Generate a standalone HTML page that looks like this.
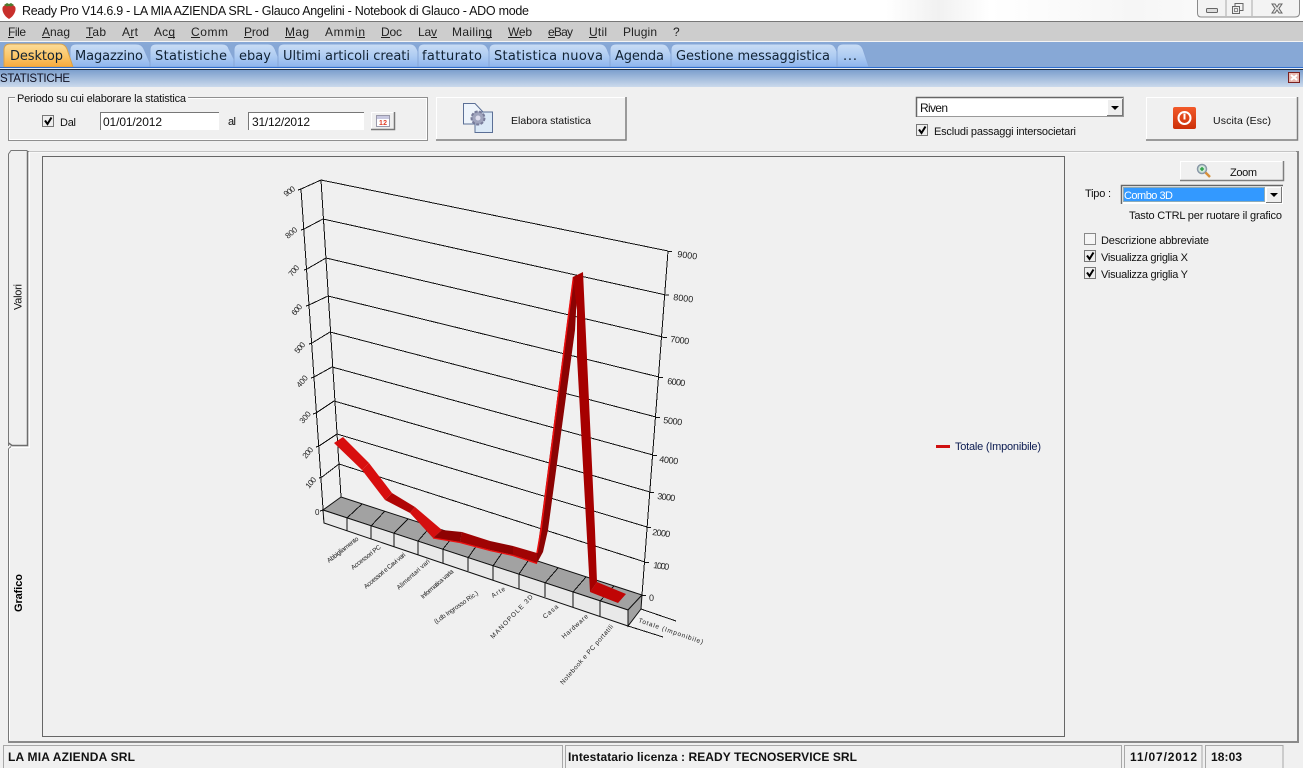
<!DOCTYPE html>
<html lang="it"><head><meta charset="utf-8"><title>Ready Pro</title>
<style>
html,body{margin:0;padding:0;width:1303px;height:768px;overflow:hidden;background:#f0f0f0}
svg{display:block}
text{font-family:"Liberation Sans",sans-serif;font-size:11px;fill:#111;white-space:pre}
.m{font-size:12px;fill:#222}
.tb{font-family:"DejaVu Sans",sans-serif;font-size:13px;fill:#123}
.s{font-size:12px;font-weight:bold;fill:#111}
.l{font-size:6.5px;fill:#222}
.a{font-size:9px;fill:#222}
.b{font-size:8px;fill:#222}
.g{stroke:#111;stroke-width:1;fill:none;shape-rendering:crispEdges}
.tab{fill:url(#tabBlue);stroke:#86a6d6;stroke-width:1}
</style></head><body>
<svg width="1303" height="768" viewBox="0 0 1303 768" xmlns="http://www.w3.org/2000/svg">
<defs>
<linearGradient id="tabBlue" x1="0" y1="0" x2="0" y2="1"><stop offset="0" stop-color="#c9ddf5"/><stop offset=".5" stop-color="#b0cdf2"/><stop offset="1" stop-color="#8db5ee"/></linearGradient>
<linearGradient id="tabOr" x1="0" y1="0" x2="0" y2="1"><stop offset="0" stop-color="#fbdc9a"/><stop offset=".55" stop-color="#fbc566"/><stop offset="1" stop-color="#f8a93c"/></linearGradient>
<linearGradient id="cap" x1="0" y1="0" x2="0" y2="1"><stop offset="0" stop-color="#7c9fcd"/><stop offset="1" stop-color="#cbdaec"/></linearGradient>
<linearGradient id="ttl" x1="0" y1="0" x2="1" y2="0"><stop offset="0" stop-color="#fff"/><stop offset=".68" stop-color="#fff"/><stop offset=".72" stop-color="#f1f1f1"/><stop offset=".76" stop-color="#fff"/><stop offset=".87" stop-color="#f6f6f6"/><stop offset="1" stop-color="#fff"/></linearGradient>
<linearGradient id="pw" x1="0" y1="0" x2="0" y2="1"><stop offset="0" stop-color="#f25a2a"/><stop offset="1" stop-color="#cc2f08"/></linearGradient>
</defs>

<rect width="1303" height="768" fill="#f0f0f0"/>
<!-- title bar -->
<rect width="1303" height="21" fill="url(#ttl)"/>
<path d="M9 19C4 16 2 11 2.500 8C3 5 6 5 9 5.500C12 5 15 5 15.500 8C16 11 14 16 9 19Z" fill="#c8302c"/>
<path d="M4 5L7 3L9 4L11 3L14 5L11 6.500L9 6L7 6.500Z" fill="#4e7a2e"/>
<text x="22" y="15" textLength="507" style="font-size:12.5px;fill:#111">Ready Pro V14.6.9 - LA MIA AZIENDA SRL - Glauco Angelini - Notebook di Glauco - ADO mode</text>
<path d="M1197.500 0V13Q1197.500 17 1201 17H1295Q1299.500 17 1299.500 13V0" fill="#f3f3f3" stroke="#8a8a8a"/>
<path d="M1226 0V16M1252 0V16" stroke="#aaa"/>
<rect x="1206.500" y="8.500" width="11" height="4" rx="1" fill="#ddd" stroke="#666"/>
<rect x="1232.500" y="6.500" width="7" height="7" fill="#eee" stroke="#666"/><path d="M1235 6V3.500H1243V10.500H1240" fill="none" stroke="#666"/><rect x="1234.500" y="8.500" width="3" height="3" fill="none" stroke="#888"/>
<path d="M1272 4H1275L1277 7L1279 4H1282L1279 8.500L1282 13H1279L1277 10L1275 13H1272L1275 8.500Z" fill="#e8e8e8" stroke="#666"/>

<!-- menu -->
<rect y="21" width="1303" height="1" fill="#777"/>
<rect y="22" width="1303" height="19" fill="#cdcdcd"/>
<rect y="41" width="1303" height="1" fill="#f4f4f4"/>
<g class="mn">
<text class="m" x="8" y="36" textLength="18">File</text>
<text class="m" x="42" y="36" textLength="28">Anag</text>
<text class="m" x="86" y="36" textLength="20">Tab</text>
<text class="m" x="122" y="36" textLength="16">Art</text>
<text class="m" x="154" y="36" textLength="21">Acq</text>
<text class="m" x="191" y="36" textLength="37">Comm</text>
<text class="m" x="244" y="36" textLength="25">Prod</text>
<text class="m" x="285" y="36" textLength="24">Mag</text>
<text class="m" x="325" y="36" textLength="40">Ammin</text>
<text class="m" x="381" y="36" textLength="21">Doc</text>
<text class="m" x="418" y="36" textLength="19">Lav</text>
<text class="m" x="452" y="36" textLength="40">Mailing</text>
<text class="m" x="508" y="36" textLength="24">Web</text>
<text class="m" x="548" y="36" textLength="25">eBay</text>
<text class="m" x="589" y="36" textLength="18">Util</text>
<text class="m" x="623" y="36" textLength="34">Plugin</text>
<text class="m" x="673" y="36" textLength="6">?</text>
</g>
<path d="M8 37.500H14M42 37.500H50M86 37.500H93M129 37.500H134M168 37.500H175M191 37.500H200M244 37.500H252M285 37.500H295M357 37.500H365M381 37.500H390M431 37.500H437M481 37.500H492M508 37.500H522M548 37.500H555M589 37.500H597" stroke="#222" fill="none"/>

<!-- tab bar -->
<rect y="42" width="1303" height="27" fill="#87a8d6"/>
<path class="tab" d="M70 67V50Q70 44 76 44H136Q142 44 144 49L152 67Z"/>
<path class="tab" d="M150 67V50Q150 44 156 44H222Q228 44 229 49L238 67Z"/>
<path class="tab" d="M234 67V50Q234 44 240 44H268Q273 44 275 49L282 67Z"/>
<path class="tab" d="M278 67V50Q278 44 284 44H410Q415 44 417 49L424 67Z"/>
<path class="tab" d="M418 67V50Q418 44 424 44H481Q486 44 488 49L495 67Z"/>
<path class="tab" d="M489 67V50Q489 44 495 44H600Q605 44 607 49L614 67Z"/>
<path class="tab" d="M610 67V50Q610 44 616 44H662Q667 44 669 49L676 67Z"/>
<path class="tab" d="M671 67V50Q671 44 677 44H829Q834 44 836 49L843 67Z"/>
<path class="tab" d="M837 67V50Q837 44 843 44H856Q861 44 863 49L869 67Z"/>
<path d="M4 67V50Q4 44 10 44H60Q65 44 67 49L73 67Z" fill="url(#tabOr)" stroke="#d8a14a"/>
<text class="tb" x="10" y="60" textLength="53">Desktop</text>
<text class="tb" x="75" y="60" textLength="68">Magazzino</text>
<text class="tb" x="155" y="60" textLength="72">Statistiche</text>
<text class="tb" x="239" y="60" textLength="32">ebay</text>
<text class="tb" x="283" y="60" textLength="127">Ultimi articoli creati</text>
<text class="tb" x="422" y="60" textLength="60">fatturato</text>
<text class="tb" x="494" y="60" textLength="109">Statistica nuova</text>
<text class="tb" x="615" y="60" textLength="49">Agenda</text>
<text class="tb" x="676" y="60" textLength="154">Gestione messaggistica</text>
<text class="tb" x="843" y="60" textLength="14">...</text>
<rect y="67" width="1303" height="1" fill="#2f6fd0"/>
<rect y="68" width="1303" height="1" fill="#e8eef6"/>
<rect y="69" width="1303" height="1" fill="#1b2a3f"/>

<!-- caption -->
<rect y="70" width="1303" height="17" fill="url(#cap)"/>
<text x="0" y="82" textLength="70" style="font-size:11.5px;fill:#112">STATISTICHE</text>
<rect x="1288.500" y="72.500" width="11" height="10" fill="#e8b8b0" stroke="#7a2020"/>
<path d="M1291 75L1297 80M1297 75L1291 80" stroke="#fff" stroke-width="2"/>

<!-- period group -->
<rect x="8.500" y="97.500" width="419" height="43" fill="none" stroke="#8f8f8f"/>
<rect x="9.500" y="98.500" width="417" height="41" fill="none" stroke="#fff"/>
<rect x="15" y="94" width="173" height="8" fill="#f0f0f0"/>
<text x="17" y="102" textLength="169">Periodo su cui elaborare la statistica</text>
<rect x="42.500" y="115.500" width="11" height="11" fill="#eee" stroke="#777"/>
<path d="M45 120.500L47.500 124L51.500 117.500" fill="none" stroke="#000" stroke-width="2"/>
<text x="60" y="126" textLength="16">Dal</text>
<rect x="100" y="112" width="119" height="18" fill="#fff"/><path d="M100.500 130V112.500H219" fill="none" stroke="#777"/>
<text x="103" y="126" textLength="59" style="font-size:12px">01/01/2012</text>
<text x="228" y="125" textLength="8">al</text>
<rect x="248" y="112" width="116" height="18" fill="#fff"/><path d="M248.500 130V112.500H364" fill="none" stroke="#777"/>
<text x="252" y="126" textLength="58" style="font-size:12px">31/12/2012</text>
<rect x="371" y="112" width="24" height="18" fill="#efefef"/><path d="M371.500 130V112.500H395" fill="none" stroke="#fff"/><path d="M394.500 112V129.500H371" fill="none" stroke="#777" stroke-width="1.500"/>
<rect x="376.500" y="115.500" width="13" height="11" fill="#fff" stroke="#99a"/><rect x="377" y="116" width="12" height="3" fill="#c8c8e0"/><text x="379" y="125" textLength="8" style="font-size:7px;font-weight:bold;fill:#e0402a">12</text>

<!-- elabora -->
<rect x="436" y="97" width="191" height="44" fill="#f0f0f0"/>
<path d="M436.500 140V97.500H626" fill="none" stroke="#fff"/><path d="M626 97V140H436" fill="none" stroke="#7e7e7e" stroke-width="1.500"/>
<path d="M463.500 103.500H475L483 112V124H463.500Z" fill="#eef4fb" stroke="#5b6f96"/>
<path d="M475 112H492.500V132.500H475Z" fill="#dbe9f7" stroke="#5b6f96"/>
<circle cx="478" cy="118" r="6.500" fill="#9fa4bd" stroke="#777b99" stroke-dasharray="3 1.500" stroke-width="2"/><circle cx="478" cy="118" r="2.500" fill="#dde"/>
<text x="511" y="124" textLength="80" style="font-size:10.500px">Elabora statistica</text>

<!-- combo riven -->
<rect x="916" y="97" width="208" height="20" fill="#fff"/><path d="M916.500 117V97.500H1124" fill="none" stroke="#666" stroke-width="1.500"/><path d="M1123.500 97V116.500H917" fill="none" stroke="#999"/>
<text x="920" y="112" textLength="28" style="font-size:12px">Riven</text>
<rect x="1107" y="99" width="16" height="17" fill="#eee"/><path d="M1107.500 116V99.500H1123" fill="none" stroke="#fff"/><path d="M1122.500 99V115.500H1107" fill="none" stroke="#777"/>
<path d="M1111 106H1119L1115 110Z" fill="#000"/>
<rect x="916.500" y="124.500" width="11" height="11" fill="#eee" stroke="#777"/>
<path d="M919 129.500L921.500 133L925.500 126.500" fill="none" stroke="#000" stroke-width="2"/>
<text x="934" y="135" textLength="142">Escludi passaggi intersocietari</text>

<!-- uscita -->
<path d="M1146.500 140V97.500H1298" fill="none" stroke="#fff"/><path d="M1297.500 97V140H1146" fill="none" stroke="#7e7e7e" stroke-width="1.500"/>
<rect x="1173" y="107" width="23" height="22" rx="2" fill="url(#pw)"/>
<circle cx="1184.500" cy="118" r="6" fill="none" stroke="#fff" stroke-width="2"/><rect x="1183.500" y="113.500" width="2" height="6" fill="#fff"/>
<text x="1213" y="124" textLength="58" style="font-size:10.500px">Uscita (Esc)</text>

<!-- main panel -->
<path d="M28 151.500H1298" stroke="#8a8a8a" fill="none"/>
<path d="M1298 151V742H8" stroke="#8a8a8a" stroke-width="2" fill="none"/>
<path d="M8.500 741V449L11 446.500" stroke="#777" fill="none"/>
<path d="M9.500 740V449L12 447.500H29.500V152H1296" stroke="#fff" fill="none"/>
<!-- valori tab -->
<path d="M8.500 446V154L11 150.500H27.500" fill="none" stroke="#777"/>
<path d="M27.500 151V445.500H12L8.500 443" fill="none" stroke="#6e6e6e" stroke-width="1.500"/>
<text transform="translate(21.500,310) rotate(-90)" textLength="26" x="0" y="0">Valori</text>
<text transform="translate(22,612) rotate(-90)" textLength="38" x="0" y="0" style="font-weight:bold;fill:#000">Grafico</text>
<!-- chart frame -->
<rect x="42.500" y="156.500" width="1022" height="580" fill="#f0f0f0" stroke="#666"/>

<!-- chart -->
<g class="g">
<!-- back wall -->
<path d="M321 180L668 251M323 219L666 295M326 258L663 337M328 296L659 377M330 332L656 417M332 367L653 455M334 401L650 492M337 434L647 527M339 464L645 562"/>
<!-- left wall -->
<path d="M321 180L301 189M323 219L304 229M326 258L307 269M328 296L309 305M330 332L312 343M332 367L314 377M334 401L316 413M337 434L319 446M339 464L322 477"/>
<path d="M321 180L341 497M301 189L324 523M668 251L642 595"/>
<!-- ticks -->
<path d="M668 251.500H672M666 295H669M663 337.500H667M659 377.500H663M656 417.500H660M653 455.500H657M650 492.500H654M647 527.500H651M645 562.500H649M642 595.500H646"/>
<path d="M301 189L298 190M304 229L301 230M307 269L304 270M309 305L306 306M312 343L309 344M314 377L311 378M316 413L313 414M319 446L316 447M322 477L319 478M323 510L320 511"/>
</g>
<polygon points="341,497 642,595 628,610 323,510" fill="#a2a2a2" stroke="#111" stroke-width="1"/>
<polygon points="323,510 628,610 628,626 324,523" fill="#e9e9e9" stroke="#111" stroke-width="1"/>
<polygon points="628,610 642,595 641,609 628,626" fill="#a2a2a2" stroke="#111" stroke-width="1"/>
<g class="g">
<path d="M347 518L362 504M371 526L385 511M394 533L408 519M418 541L431 526M443 549L455 534M468 558L479 542M493 566L504 550M519 574L530 558M545 583L558 568M573 592L586 577M600 601L614 586"/>
<path d="M347 518V531M371 526V539M394 533V547M418 541V555M443 549V563M468 558V571M493 566V580M519 574V589M545 583V597M573 592V607M600 601V616"/>
<path d="M641 609L676 621M628 626L663 637"/>
</g>

<!-- ribbon -->
<polygon points="343,437 369,463 362,470 334,443" fill="#d80e0e"/>
<polygon points="369,463 392,493 385,500 362,470" fill="#d80e0e"/>
<polygon points="392,493 415,507 410,513 385,500" fill="#b00505"/>
<polygon points="415,507 442,530 433,538 410,513" fill="#d40f0f"/>
<polygon points="442,530 462,532 460,542 433,538" fill="#8e0202"/>
<polygon points="462,532 490,541 490,550 460,542" fill="#a00404"/>
<polygon points="490,541 513,546 513,555 490,550" fill="#8e0202"/>
<polygon points="513,546 537,553 537,563 513,555" fill="#a00404"/>
<path d="M433 538L460 542.500L490 550.500L513 555.500L537 563.500" stroke="#ee1010" stroke-width="1.200" fill="none"/>
<polygon points="537,553 540,530 573,277 578,275 575,330 548,530 543,552 537,563" fill="#8b0303"/>
<path d="M537 553L541 530L573.500 277" stroke="#ee1010" stroke-width="1.500" fill="none"/>
<polygon points="573,277 583,272 595,530 597,582 590,592 586,520 577,357 577,310" fill="#a60000"/>
<polygon points="597,582 626,594 618,603 590,592" fill="#c00505"/>

<!-- axis labels -->
<g>
<text class="a" transform="translate(677,257) rotate(7)" textLength="20" x="0" y="0">9000</text>
<text class="a" transform="translate(673,300) rotate(7)" textLength="20" x="0" y="0">8000</text>
<text class="a" transform="translate(670,342) rotate(7)" textLength="19" x="0" y="0">7000</text>
<text class="a" transform="translate(667,384) rotate(7)" textLength="18" x="0" y="0">6000</text>
<text class="a" transform="translate(663,423) rotate(7)" textLength="19" x="0" y="0">5000</text>
<text class="a" transform="translate(659,462) rotate(7)" textLength="19" x="0" y="0">4000</text>
<text class="a" transform="translate(657,499) rotate(7)" textLength="18" x="0" y="0">3000</text>
<text class="a" transform="translate(652,535) rotate(7)" textLength="18" x="0" y="0">2000</text>
<text class="a" transform="translate(653,568) rotate(7)" textLength="16" x="0" y="0">1000</text>
<text class="a" x="649" y="601">0</text>
<text class="b" transform="translate(286,197) rotate(-35)" textLength="12" x="0" y="0">900</text>
<text class="b" transform="translate(288,239) rotate(-40)" textLength="13" x="0" y="0">800</text>
<text class="b" transform="translate(292,277) rotate(-50)" textLength="12" x="0" y="0">700</text>
<text class="b" transform="translate(295,316) rotate(-50)" textLength="12" x="0" y="0">600</text>
<text class="b" transform="translate(298,354) rotate(-50)" textLength="12" x="0" y="0">500</text>
<text class="b" transform="translate(300,388) rotate(-50)" textLength="13" x="0" y="0">400</text>
<text class="b" transform="translate(303,424) rotate(-50)" textLength="13" x="0" y="0">300</text>
<text class="b" transform="translate(306,459) rotate(-50)" textLength="12" x="0" y="0">200</text>
<text class="b" transform="translate(309,489) rotate(-50)" textLength="12" x="0" y="0">100</text>
<text class="b" x="315" y="515">0</text>
</g>
<text class="l" transform="translate(329,563) rotate(-38)" textLength="38" x="0" y="0">Abbigliamento</text>
<text class="l" transform="translate(353,570) rotate(-38)" textLength="36" x="0" y="0">Accessori PC</text>
<text class="l" transform="translate(366,589) rotate(-40)" textLength="52" x="0" y="0">Accessori e Cavi vari</text>
<text class="l" transform="translate(399,590) rotate(-42)" textLength="42" x="0" y="0">Alimentari vari</text>
<text class="l" transform="translate(423,599) rotate(-41)" textLength="41" x="0" y="0">Informatica varia</text>
<text class="l" transform="translate(436,624) rotate(-35)" textLength="52" x="0" y="0">(Ldb Ingrosso Ric.)</text>
<text class="l" transform="translate(493,598) rotate(-32)" textLength="15" x="0" y="0">Arte</text>
<text class="l" transform="translate(493,639) rotate(-46)" textLength="58" x="0" y="0">MANOPOLE 3D</text>
<text class="l" transform="translate(545,619) rotate(-40)" textLength="18" x="0" y="0">Casa</text>
<text class="l" transform="translate(564,639) rotate(-42)" textLength="33" x="0" y="0">Hardware</text>
<text class="l" transform="translate(563,685) rotate(-49)" textLength="77" x="0" y="0">Notebook e PC portatili</text>
<text class="l" transform="translate(638,622) rotate(19)" textLength="68" x="0" y="0">Totale (Imponibile)</text>

<!-- legend -->
<rect x="936" y="445" width="14" height="3" fill="#d01010"/>
<text x="955" y="450" textLength="86" style="fill:#0a1a50">Totale (Imponibile)</text>

<!-- right controls -->
<path d="M1180.500 180V161.500H1284" fill="none" stroke="#fff"/><path d="M1283.500 161V180.500H1180" fill="none" stroke="#7e7e7e" stroke-width="1.500"/>
<circle cx="1202" cy="169" r="4.500" fill="#cfe6d8" stroke="#8a98a8" stroke-width="1.500"/>
<path d="M1200 169H1204M1202 167V171" stroke="#1f9a3a" stroke-width="1.300"/>
<path d="M1205.500 172.500L1210 177" stroke="#d8903a" stroke-width="2.500"/>
<text x="1230" y="176" textLength="27" style="font-size:11px">Zoom</text>
<text x="1085" y="197" textLength="26">Tipo :</text>
<rect x="1121" y="185" width="162" height="19" fill="#fff"/><path d="M1121.500 204V185.500H1283" fill="none" stroke="#666" stroke-width="1.500"/>
<rect x="1123" y="187" width="142" height="15" fill="#3399ff"/>
<rect x="1123.500" y="187.500" width="141" height="14" fill="none" stroke="#e8c070" stroke-dasharray="1 1"/>
<text x="1124" y="199" textLength="49" style="fill:#fff;font-size:11px">Combo 3D</text>
<rect x="1266" y="187" width="16" height="16" fill="#eee"/><path d="M1266.500 203V187.500H1282" fill="none" stroke="#fff"/><path d="M1281.500 187V202.500H1266" fill="none" stroke="#777"/>
<path d="M1270 193H1278L1274 197Z" fill="#000"/>
<text x="1129" y="219" textLength="153">Tasto CTRL per ruotare il grafico</text>
<rect x="1084.500" y="233.500" width="11" height="11" fill="#f5f5f5" stroke="#888"/>
<text x="1101" y="244" textLength="108">Descrizione abbreviate</text>
<rect x="1084.500" y="250.500" width="11" height="11" fill="#eee" stroke="#777"/>
<path d="M1087 255.500L1089.500 259L1093.500 252.500" fill="none" stroke="#000" stroke-width="2"/>
<text x="1101" y="261" textLength="87">Visualizza griglia X</text>
<rect x="1084.500" y="267.500" width="11" height="11" fill="#eee" stroke="#777"/>
<path d="M1087 272.500L1089.500 276L1093.500 269.500" fill="none" stroke="#000" stroke-width="2"/>
<text x="1101" y="278" textLength="87">Visualizza griglia Y</text>

<!-- status bar -->
<path d="M3.500 768V745.500H562.500V768" fill="none" stroke="#a8a8a8"/>
<path d="M565.500 768V745.500H1121.500V768" fill="none" stroke="#a8a8a8"/>
<path d="M1124.500 768V745.500H1202V768" fill="none" stroke="#a8a8a8"/>
<path d="M1205.500 768V745.500H1283V768" fill="none" stroke="#a8a8a8"/>
<text class="s" x="8" y="761" textLength="127">LA MIA AZIENDA SRL</text>
<text class="s" x="568" y="761" textLength="289">Intestatario licenza : READY TECNOSERVICE SRL</text>
<text class="s" x="1130" y="761" textLength="67">11/07/2012</text>
<text class="s" x="1211" y="761" textLength="31">18:03</text>
</svg>
</body></html>
